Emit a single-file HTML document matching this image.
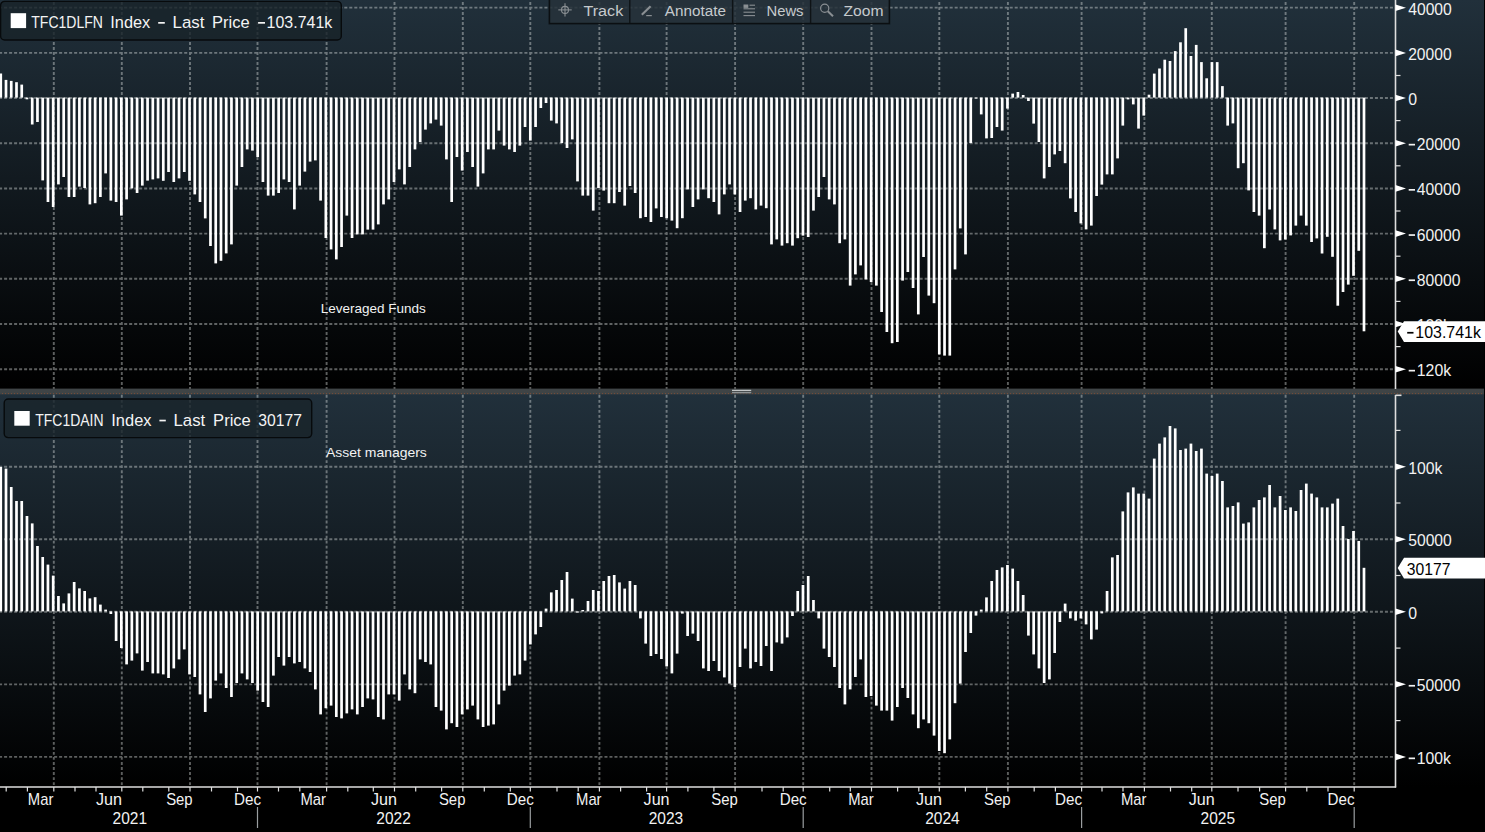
<!DOCTYPE html><html><head><meta charset="utf-8"><title>chart</title>
<style>html,body{margin:0;padding:0;background:#000;overflow:hidden}body{width:1485px;height:832px}svg{display:block}text{font-family:"Liberation Sans",sans-serif}</style></head><body>
<svg width="1485" height="832" viewBox="0 0 1485 832">
<defs><linearGradient id="g1" x1="0" y1="0" x2="0" y2="1"><stop offset="0" stop-color="#21303b"/><stop offset="1" stop-color="#000"/></linearGradient>
<linearGradient id="gg1" gradientUnits="userSpaceOnUse" x1="0" y1="0" x2="0" y2="389"><stop offset="0" stop-color="#ecf0ee"/><stop offset="1" stop-color="#ecf0ee"/></linearGradient>
<linearGradient id="gg2" gradientUnits="userSpaceOnUse" x1="0" y1="394" x2="0" y2="787"><stop offset="0" stop-color="#ecf0ee"/><stop offset="1" stop-color="#ecf0ee"/></linearGradient>
<linearGradient id="g2" x1="0" y1="0" x2="0" y2="1"><stop offset="0" stop-color="#21303b"/><stop offset="1" stop-color="#000"/></linearGradient></defs>
<rect x="0" y="0" width="1485" height="832" fill="#000"/>
<rect x="0" y="0" width="1484" height="389" fill="url(#g1)"/>
<rect x="0" y="394" width="1484" height="393" fill="url(#g2)"/>
<rect x="0" y="388.6" width="1484" height="5.8" fill="#3f4446"/>
<line x1="2" y1="393.6" x2="1484" y2="393.6" stroke="#b4582a" stroke-opacity="0.5" stroke-width="1" stroke-dasharray="1 2"/>
<rect x="732" y="389.7" width="19.2" height="3.9" fill="#4a4f51"/><rect x="732" y="389.8" width="19.2" height="1.2" fill="#c2c5c6"/><rect x="732" y="392" width="19.2" height="1.2" fill="#8f9395"/>
<g stroke-width="1.90" fill="none" opacity="0.39">
<line x1="53.8" y1="-2.9" x2="53.8" y2="388.8" stroke="url(#gg1)" stroke-dasharray="2.9 2.1"/>
<line x1="53.8" y1="394.85" x2="53.8" y2="787" stroke="url(#gg2)" stroke-dasharray="2.85 2.18"/>
<line x1="121.8" y1="-2.9" x2="121.8" y2="388.8" stroke="url(#gg1)" stroke-dasharray="2.9 2.1"/>
<line x1="121.8" y1="394.85" x2="121.8" y2="787" stroke="url(#gg2)" stroke-dasharray="2.85 2.18"/>
<line x1="190.0" y1="-2.9" x2="190.0" y2="388.8" stroke="url(#gg1)" stroke-dasharray="2.9 2.1"/>
<line x1="190.0" y1="394.85" x2="190.0" y2="787" stroke="url(#gg2)" stroke-dasharray="2.85 2.18"/>
<line x1="257.5" y1="-2.9" x2="257.5" y2="388.8" stroke="url(#gg1)" stroke-dasharray="2.9 2.1"/>
<line x1="257.5" y1="394.85" x2="257.5" y2="787" stroke="url(#gg2)" stroke-dasharray="2.85 2.18"/>
<line x1="326.6" y1="-2.9" x2="326.6" y2="388.8" stroke="url(#gg1)" stroke-dasharray="2.9 2.1"/>
<line x1="326.6" y1="394.85" x2="326.6" y2="787" stroke="url(#gg2)" stroke-dasharray="2.85 2.18"/>
<line x1="394.5" y1="-2.9" x2="394.5" y2="388.8" stroke="url(#gg1)" stroke-dasharray="2.9 2.1"/>
<line x1="394.5" y1="394.85" x2="394.5" y2="787" stroke="url(#gg2)" stroke-dasharray="2.85 2.18"/>
<line x1="462.8" y1="-2.9" x2="462.8" y2="388.8" stroke="url(#gg1)" stroke-dasharray="2.9 2.1"/>
<line x1="462.8" y1="394.85" x2="462.8" y2="787" stroke="url(#gg2)" stroke-dasharray="2.85 2.18"/>
<line x1="530.3" y1="-2.9" x2="530.3" y2="388.8" stroke="url(#gg1)" stroke-dasharray="2.9 2.1"/>
<line x1="530.3" y1="394.85" x2="530.3" y2="787" stroke="url(#gg2)" stroke-dasharray="2.85 2.18"/>
<line x1="599.4" y1="-2.9" x2="599.4" y2="388.8" stroke="url(#gg1)" stroke-dasharray="2.9 2.1"/>
<line x1="599.4" y1="394.85" x2="599.4" y2="787" stroke="url(#gg2)" stroke-dasharray="2.85 2.18"/>
<line x1="666.6" y1="-2.9" x2="666.6" y2="388.8" stroke="url(#gg1)" stroke-dasharray="2.9 2.1"/>
<line x1="666.6" y1="394.85" x2="666.6" y2="787" stroke="url(#gg2)" stroke-dasharray="2.85 2.18"/>
<line x1="735.1" y1="-2.9" x2="735.1" y2="388.8" stroke="url(#gg1)" stroke-dasharray="2.9 2.1"/>
<line x1="735.1" y1="394.85" x2="735.1" y2="787" stroke="url(#gg2)" stroke-dasharray="2.85 2.18"/>
<line x1="803.2" y1="-2.9" x2="803.2" y2="388.8" stroke="url(#gg1)" stroke-dasharray="2.9 2.1"/>
<line x1="803.2" y1="394.85" x2="803.2" y2="787" stroke="url(#gg2)" stroke-dasharray="2.85 2.18"/>
<line x1="871.5" y1="-2.9" x2="871.5" y2="388.8" stroke="url(#gg1)" stroke-dasharray="2.9 2.1"/>
<line x1="871.5" y1="394.85" x2="871.5" y2="787" stroke="url(#gg2)" stroke-dasharray="2.85 2.18"/>
<line x1="939.3" y1="-2.9" x2="939.3" y2="388.8" stroke="url(#gg1)" stroke-dasharray="2.9 2.1"/>
<line x1="939.3" y1="394.85" x2="939.3" y2="787" stroke="url(#gg2)" stroke-dasharray="2.85 2.18"/>
<line x1="1007.9" y1="-2.9" x2="1007.9" y2="388.8" stroke="url(#gg1)" stroke-dasharray="2.9 2.1"/>
<line x1="1007.9" y1="394.85" x2="1007.9" y2="787" stroke="url(#gg2)" stroke-dasharray="2.85 2.18"/>
<line x1="1081.6" y1="-2.9" x2="1081.6" y2="388.8" stroke="url(#gg1)" stroke-dasharray="2.9 2.1"/>
<line x1="1081.6" y1="394.85" x2="1081.6" y2="787" stroke="url(#gg2)" stroke-dasharray="2.85 2.18"/>
<line x1="1144.4" y1="-2.9" x2="1144.4" y2="388.8" stroke="url(#gg1)" stroke-dasharray="2.9 2.1"/>
<line x1="1144.4" y1="394.85" x2="1144.4" y2="787" stroke="url(#gg2)" stroke-dasharray="2.85 2.18"/>
<line x1="1211.8" y1="-2.9" x2="1211.8" y2="388.8" stroke="url(#gg1)" stroke-dasharray="2.9 2.1"/>
<line x1="1211.8" y1="394.85" x2="1211.8" y2="787" stroke="url(#gg2)" stroke-dasharray="2.85 2.18"/>
<line x1="1285.6" y1="-2.9" x2="1285.6" y2="388.8" stroke="url(#gg1)" stroke-dasharray="2.9 2.1"/>
<line x1="1285.6" y1="394.85" x2="1285.6" y2="787" stroke="url(#gg2)" stroke-dasharray="2.85 2.18"/>
<line x1="1354.2" y1="-2.9" x2="1354.2" y2="388.8" stroke="url(#gg1)" stroke-dasharray="2.9 2.1"/>
<line x1="1354.2" y1="394.85" x2="1354.2" y2="787" stroke="url(#gg2)" stroke-dasharray="2.85 2.18"/>
<line x1="-0.9" y1="7.67" x2="1395.5" y2="7.67" stroke="url(#gg1)" stroke-dasharray="3 2.003"/>
<line x1="-0.9" y1="52.86" x2="1395.5" y2="52.86" stroke="url(#gg1)" stroke-dasharray="3 2.003"/>
<line x1="-0.9" y1="98.05" x2="1395.5" y2="98.05" stroke="url(#gg1)" stroke-dasharray="3 2.003"/>
<line x1="-0.9" y1="143.24" x2="1395.5" y2="143.24" stroke="url(#gg1)" stroke-dasharray="3 2.003"/>
<line x1="-0.9" y1="188.43" x2="1395.5" y2="188.43" stroke="url(#gg1)" stroke-dasharray="3 2.003"/>
<line x1="-0.9" y1="233.62" x2="1395.5" y2="233.62" stroke="url(#gg1)" stroke-dasharray="3 2.003"/>
<line x1="-0.9" y1="278.81" x2="1395.5" y2="278.81" stroke="url(#gg1)" stroke-dasharray="3 2.003"/>
<line x1="-0.9" y1="324.00" x2="1395.5" y2="324.00" stroke="url(#gg1)" stroke-dasharray="3 2.003"/>
<line x1="-0.9" y1="369.19" x2="1395.5" y2="369.19" stroke="url(#gg1)" stroke-dasharray="3 2.003"/>
<line x1="-0.9" y1="466.72" x2="1395.5" y2="466.72" stroke="url(#gg2)" stroke-dasharray="3 2.003"/>
<line x1="-0.9" y1="539.26" x2="1395.5" y2="539.26" stroke="url(#gg2)" stroke-dasharray="3 2.003"/>
<line x1="-0.9" y1="611.80" x2="1395.5" y2="611.80" stroke="url(#gg2)" stroke-dasharray="3 2.003"/>
<line x1="-0.9" y1="684.34" x2="1395.5" y2="684.34" stroke="url(#gg2)" stroke-dasharray="3 2.003"/>
<line x1="-0.9" y1="756.88" x2="1395.5" y2="756.88" stroke="url(#gg2)" stroke-dasharray="3 2.003"/>
</g>
<g fill="#fff">
<rect x="-0.59" y="73.50" width="2.70" height="24.10"/>
<rect x="4.65" y="79.90" width="2.70" height="17.70"/>
<rect x="9.89" y="80.90" width="2.70" height="16.70"/>
<rect x="15.14" y="82.20" width="2.70" height="15.40"/>
<rect x="20.38" y="84.60" width="2.70" height="13.00"/>
<rect x="25.62" y="97.60" width="2.70" height="1.70"/>
<rect x="30.87" y="97.60" width="2.70" height="26.90"/>
<rect x="36.11" y="97.60" width="2.70" height="24.40"/>
<rect x="41.35" y="97.60" width="2.70" height="82.80"/>
<rect x="46.60" y="97.60" width="2.70" height="104.40"/>
<rect x="51.84" y="97.60" width="2.70" height="109.40"/>
<rect x="57.08" y="97.60" width="2.70" height="86.80"/>
<rect x="62.33" y="97.60" width="2.70" height="79.40"/>
<rect x="67.57" y="97.60" width="2.70" height="99.40"/>
<rect x="72.81" y="97.60" width="2.70" height="99.40"/>
<rect x="78.05" y="97.60" width="2.70" height="89.00"/>
<rect x="83.30" y="97.60" width="2.70" height="90.40"/>
<rect x="88.54" y="97.60" width="2.70" height="106.80"/>
<rect x="93.78" y="97.60" width="2.70" height="105.60"/>
<rect x="99.03" y="97.60" width="2.70" height="99.40"/>
<rect x="104.27" y="97.60" width="2.70" height="75.80"/>
<rect x="109.51" y="97.60" width="2.70" height="103.00"/>
<rect x="114.76" y="97.60" width="2.70" height="104.40"/>
<rect x="120.00" y="97.60" width="2.70" height="118.00"/>
<rect x="125.24" y="97.60" width="2.70" height="101.80"/>
<rect x="130.49" y="97.60" width="2.70" height="90.80"/>
<rect x="135.73" y="97.60" width="2.70" height="95.40"/>
<rect x="140.97" y="97.60" width="2.70" height="88.00"/>
<rect x="146.22" y="97.60" width="2.70" height="83.00"/>
<rect x="151.46" y="97.60" width="2.70" height="81.80"/>
<rect x="156.70" y="97.60" width="2.70" height="80.80"/>
<rect x="161.95" y="97.60" width="2.70" height="83.20"/>
<rect x="167.19" y="97.60" width="2.70" height="74.40"/>
<rect x="172.43" y="97.60" width="2.70" height="84.40"/>
<rect x="177.68" y="97.60" width="2.70" height="80.80"/>
<rect x="182.92" y="97.60" width="2.70" height="74.40"/>
<rect x="188.16" y="97.60" width="2.70" height="83.20"/>
<rect x="193.41" y="97.60" width="2.70" height="96.80"/>
<rect x="198.65" y="97.60" width="2.70" height="104.40"/>
<rect x="203.89" y="97.60" width="2.70" height="120.80"/>
<rect x="209.13" y="97.60" width="2.70" height="148.40"/>
<rect x="214.38" y="97.60" width="2.70" height="165.80"/>
<rect x="219.62" y="97.60" width="2.70" height="163.20"/>
<rect x="224.86" y="97.60" width="2.70" height="155.80"/>
<rect x="230.11" y="97.60" width="2.70" height="146.80"/>
<rect x="235.35" y="97.60" width="2.70" height="88.00"/>
<rect x="240.59" y="97.60" width="2.70" height="69.40"/>
<rect x="245.84" y="97.60" width="2.70" height="51.80"/>
<rect x="251.08" y="97.60" width="2.70" height="53.00"/>
<rect x="256.32" y="97.60" width="2.70" height="59.40"/>
<rect x="261.57" y="97.60" width="2.70" height="84.40"/>
<rect x="266.81" y="97.60" width="2.70" height="98.00"/>
<rect x="272.05" y="97.60" width="2.70" height="98.00"/>
<rect x="277.30" y="97.60" width="2.70" height="95.40"/>
<rect x="282.54" y="97.60" width="2.70" height="81.80"/>
<rect x="287.78" y="97.60" width="2.70" height="84.40"/>
<rect x="293.03" y="97.60" width="2.70" height="111.80"/>
<rect x="298.27" y="97.60" width="2.70" height="88.00"/>
<rect x="303.51" y="97.60" width="2.70" height="74.00"/>
<rect x="308.76" y="97.60" width="2.70" height="64.00"/>
<rect x="314.00" y="97.60" width="2.70" height="62.80"/>
<rect x="319.24" y="97.60" width="2.70" height="103.00"/>
<rect x="324.49" y="97.60" width="2.70" height="140.40"/>
<rect x="329.73" y="97.60" width="2.70" height="151.80"/>
<rect x="334.97" y="97.60" width="2.70" height="161.80"/>
<rect x="340.21" y="97.60" width="2.70" height="149.40"/>
<rect x="345.46" y="97.60" width="2.70" height="118.00"/>
<rect x="350.70" y="97.60" width="2.70" height="140.40"/>
<rect x="355.94" y="97.60" width="2.70" height="136.80"/>
<rect x="361.19" y="97.60" width="2.70" height="136.80"/>
<rect x="366.43" y="97.60" width="2.70" height="132.00"/>
<rect x="371.67" y="97.60" width="2.70" height="132.00"/>
<rect x="376.92" y="97.60" width="2.70" height="126.80"/>
<rect x="382.16" y="97.60" width="2.70" height="106.80"/>
<rect x="387.40" y="97.60" width="2.70" height="101.80"/>
<rect x="392.65" y="97.60" width="2.70" height="84.40"/>
<rect x="397.89" y="97.60" width="2.70" height="71.80"/>
<rect x="403.13" y="97.60" width="2.70" height="86.80"/>
<rect x="408.38" y="97.60" width="2.70" height="69.40"/>
<rect x="413.62" y="97.60" width="2.70" height="51.80"/>
<rect x="418.86" y="97.60" width="2.70" height="44.40"/>
<rect x="424.11" y="97.60" width="2.70" height="32.00"/>
<rect x="429.35" y="97.60" width="2.70" height="25.80"/>
<rect x="434.59" y="97.60" width="2.70" height="22.00"/>
<rect x="439.84" y="97.60" width="2.70" height="28.00"/>
<rect x="445.08" y="97.60" width="2.70" height="61.80"/>
<rect x="450.32" y="97.60" width="2.70" height="104.40"/>
<rect x="455.57" y="97.60" width="2.70" height="59.40"/>
<rect x="460.81" y="97.60" width="2.70" height="73.00"/>
<rect x="466.05" y="97.60" width="2.70" height="54.40"/>
<rect x="471.29" y="97.60" width="2.70" height="69.40"/>
<rect x="476.54" y="97.60" width="2.70" height="89.00"/>
<rect x="481.78" y="97.60" width="2.70" height="75.80"/>
<rect x="487.02" y="97.60" width="2.70" height="51.80"/>
<rect x="492.27" y="97.60" width="2.70" height="51.80"/>
<rect x="497.51" y="97.60" width="2.70" height="33.00"/>
<rect x="502.75" y="97.60" width="2.70" height="48.00"/>
<rect x="508.00" y="97.60" width="2.70" height="51.80"/>
<rect x="513.24" y="97.60" width="2.70" height="54.40"/>
<rect x="518.48" y="97.60" width="2.70" height="48.00"/>
<rect x="523.73" y="97.60" width="2.70" height="29.40"/>
<rect x="528.97" y="97.60" width="2.70" height="43.00"/>
<rect x="534.21" y="97.60" width="2.70" height="29.40"/>
<rect x="539.46" y="97.60" width="2.70" height="10.40"/>
<rect x="544.70" y="97.60" width="2.70" height="5.40"/>
<rect x="549.94" y="97.60" width="2.70" height="23.00"/>
<rect x="555.19" y="97.60" width="2.70" height="25.80"/>
<rect x="560.43" y="97.60" width="2.70" height="45.40"/>
<rect x="565.67" y="97.60" width="2.70" height="50.40"/>
<rect x="570.92" y="97.60" width="2.70" height="41.80"/>
<rect x="576.16" y="97.60" width="2.70" height="83.80"/>
<rect x="581.40" y="97.60" width="2.70" height="98.00"/>
<rect x="586.65" y="97.60" width="2.70" height="98.00"/>
<rect x="591.89" y="97.60" width="2.70" height="113.00"/>
<rect x="597.13" y="97.60" width="2.70" height="90.40"/>
<rect x="602.37" y="97.60" width="2.70" height="93.00"/>
<rect x="607.62" y="97.60" width="2.70" height="105.60"/>
<rect x="612.86" y="97.60" width="2.70" height="105.60"/>
<rect x="618.10" y="97.60" width="2.70" height="94.40"/>
<rect x="623.35" y="97.60" width="2.70" height="108.00"/>
<rect x="628.59" y="97.60" width="2.70" height="88.40"/>
<rect x="633.83" y="97.60" width="2.70" height="95.40"/>
<rect x="639.08" y="97.60" width="2.70" height="120.60"/>
<rect x="644.32" y="97.60" width="2.70" height="119.40"/>
<rect x="649.56" y="97.60" width="2.70" height="124.40"/>
<rect x="654.81" y="97.60" width="2.70" height="110.80"/>
<rect x="660.05" y="97.60" width="2.70" height="119.40"/>
<rect x="665.29" y="97.60" width="2.70" height="120.60"/>
<rect x="670.54" y="97.60" width="2.70" height="123.00"/>
<rect x="675.78" y="97.60" width="2.70" height="130.60"/>
<rect x="681.02" y="97.60" width="2.70" height="120.60"/>
<rect x="686.27" y="97.60" width="2.70" height="91.80"/>
<rect x="691.51" y="97.60" width="2.70" height="109.40"/>
<rect x="696.75" y="97.60" width="2.70" height="101.80"/>
<rect x="702.00" y="97.60" width="2.70" height="91.80"/>
<rect x="707.24" y="97.60" width="2.70" height="100.60"/>
<rect x="712.48" y="97.60" width="2.70" height="104.40"/>
<rect x="717.73" y="97.60" width="2.70" height="116.80"/>
<rect x="722.97" y="97.60" width="2.70" height="96.80"/>
<rect x="728.21" y="97.60" width="2.70" height="86.80"/>
<rect x="733.45" y="97.60" width="2.70" height="96.80"/>
<rect x="738.70" y="97.60" width="2.70" height="114.40"/>
<rect x="743.94" y="97.60" width="2.70" height="103.00"/>
<rect x="749.18" y="97.60" width="2.70" height="100.60"/>
<rect x="754.43" y="97.60" width="2.70" height="111.80"/>
<rect x="759.67" y="97.60" width="2.70" height="108.00"/>
<rect x="764.91" y="97.60" width="2.70" height="110.60"/>
<rect x="770.16" y="97.60" width="2.70" height="146.80"/>
<rect x="775.40" y="97.60" width="2.70" height="141.80"/>
<rect x="780.64" y="97.60" width="2.70" height="148.00"/>
<rect x="785.89" y="97.60" width="2.70" height="145.60"/>
<rect x="791.13" y="97.60" width="2.70" height="148.00"/>
<rect x="796.37" y="97.60" width="2.70" height="140.60"/>
<rect x="801.62" y="97.60" width="2.70" height="138.00"/>
<rect x="806.86" y="97.60" width="2.70" height="139.40"/>
<rect x="812.10" y="97.60" width="2.70" height="113.00"/>
<rect x="817.35" y="97.60" width="2.70" height="99.40"/>
<rect x="822.59" y="97.60" width="2.70" height="79.40"/>
<rect x="827.83" y="97.60" width="2.70" height="101.80"/>
<rect x="833.08" y="97.60" width="2.70" height="106.80"/>
<rect x="838.32" y="97.60" width="2.70" height="145.60"/>
<rect x="843.56" y="97.60" width="2.70" height="141.80"/>
<rect x="848.81" y="97.60" width="2.70" height="188.00"/>
<rect x="854.05" y="97.60" width="2.70" height="176.80"/>
<rect x="859.29" y="97.60" width="2.70" height="167.80"/>
<rect x="864.53" y="97.60" width="2.70" height="181.80"/>
<rect x="869.78" y="97.60" width="2.70" height="184.40"/>
<rect x="875.02" y="97.60" width="2.70" height="188.00"/>
<rect x="880.26" y="97.60" width="2.70" height="214.40"/>
<rect x="885.51" y="97.60" width="2.70" height="234.40"/>
<rect x="890.75" y="97.60" width="2.70" height="245.60"/>
<rect x="895.99" y="97.60" width="2.70" height="244.40"/>
<rect x="901.24" y="97.60" width="2.70" height="183.00"/>
<rect x="906.48" y="97.60" width="2.70" height="174.40"/>
<rect x="911.72" y="97.60" width="2.70" height="190.40"/>
<rect x="916.97" y="97.60" width="2.70" height="216.80"/>
<rect x="922.21" y="97.60" width="2.70" height="159.40"/>
<rect x="927.45" y="97.60" width="2.70" height="198.00"/>
<rect x="932.70" y="97.60" width="2.70" height="205.60"/>
<rect x="937.94" y="97.60" width="2.70" height="256.80"/>
<rect x="943.18" y="97.60" width="2.70" height="258.00"/>
<rect x="948.43" y="97.60" width="2.70" height="258.00"/>
<rect x="953.67" y="97.60" width="2.70" height="171.80"/>
<rect x="958.91" y="97.60" width="2.70" height="130.80"/>
<rect x="964.16" y="97.60" width="2.70" height="156.80"/>
<rect x="1074.26" y="97.60" width="2.70" height="114.40"/>
<rect x="1079.51" y="97.60" width="2.70" height="125.80"/>
<rect x="1084.75" y="97.60" width="2.70" height="131.80"/>
<rect x="1089.99" y="97.60" width="2.70" height="128.00"/>
<rect x="969.40" y="97.60" width="2.70" height="45.40"/>
<rect x="974.64" y="97.60" width="2.70" height="0.90"/>
<rect x="979.89" y="97.60" width="2.70" height="16.80"/>
<rect x="985.13" y="97.60" width="2.70" height="40.80"/>
<rect x="990.37" y="97.60" width="2.70" height="40.40"/>
<rect x="995.61" y="97.60" width="2.70" height="29.40"/>
<rect x="1000.86" y="97.60" width="2.70" height="33.00"/>
<rect x="1006.10" y="97.60" width="2.70" height="11.00"/>
<rect x="1011.34" y="93.60" width="2.70" height="4.00"/>
<rect x="1016.59" y="92.00" width="2.70" height="5.60"/>
<rect x="1021.83" y="95.00" width="2.70" height="2.60"/>
<rect x="1027.07" y="97.60" width="2.70" height="3.40"/>
<rect x="1032.32" y="97.60" width="2.70" height="26.00"/>
<rect x="1037.56" y="97.60" width="2.70" height="44.40"/>
<rect x="1042.80" y="97.60" width="2.70" height="80.80"/>
<rect x="1048.05" y="97.60" width="2.70" height="69.40"/>
<rect x="1053.29" y="97.60" width="2.70" height="56.80"/>
<rect x="1058.53" y="97.60" width="2.70" height="53.40"/>
<rect x="1063.78" y="97.60" width="2.70" height="65.60"/>
<rect x="1069.02" y="97.60" width="2.70" height="100.80"/>
<rect x="1095.24" y="97.60" width="2.70" height="98.40"/>
<rect x="1100.48" y="97.60" width="2.70" height="87.00"/>
<rect x="1105.72" y="97.60" width="2.70" height="76.80"/>
<rect x="1110.97" y="97.60" width="2.70" height="76.80"/>
<rect x="1116.21" y="97.60" width="2.70" height="60.80"/>
<rect x="1121.45" y="97.60" width="2.70" height="28.00"/>
<rect x="1126.69" y="97.60" width="2.70" height="1.80"/>
<rect x="1131.94" y="97.60" width="2.70" height="6.80"/>
<rect x="1137.18" y="97.60" width="2.70" height="31.00"/>
<rect x="1142.42" y="97.60" width="2.70" height="18.00"/>
<rect x="1147.67" y="94.70" width="2.70" height="2.90"/>
<rect x="1152.91" y="73.60" width="2.70" height="24.00"/>
<rect x="1158.15" y="68.50" width="2.70" height="29.10"/>
<rect x="1163.40" y="59.70" width="2.70" height="37.90"/>
<rect x="1168.64" y="61.00" width="2.70" height="36.60"/>
<rect x="1173.88" y="51.10" width="2.70" height="46.50"/>
<rect x="1179.13" y="42.30" width="2.70" height="55.30"/>
<rect x="1184.37" y="28.20" width="2.70" height="69.40"/>
<rect x="1189.61" y="56.00" width="2.70" height="41.60"/>
<rect x="1194.86" y="44.90" width="2.70" height="52.70"/>
<rect x="1200.10" y="62.10" width="2.70" height="35.50"/>
<rect x="1205.34" y="78.30" width="2.70" height="19.30"/>
<rect x="1210.59" y="62.10" width="2.70" height="35.50"/>
<rect x="1215.83" y="62.10" width="2.70" height="35.50"/>
<rect x="1221.07" y="86.10" width="2.70" height="11.50"/>
<rect x="1226.32" y="97.60" width="2.70" height="28.00"/>
<rect x="1231.56" y="97.60" width="2.70" height="25.80"/>
<rect x="1236.80" y="97.60" width="2.70" height="70.60"/>
<rect x="1242.05" y="97.60" width="2.70" height="65.60"/>
<rect x="1247.29" y="97.60" width="2.70" height="92.80"/>
<rect x="1252.53" y="97.60" width="2.70" height="114.40"/>
<rect x="1257.77" y="97.60" width="2.70" height="118.00"/>
<rect x="1263.02" y="97.60" width="2.70" height="150.60"/>
<rect x="1268.26" y="97.60" width="2.70" height="111.90"/>
<rect x="1273.50" y="97.60" width="2.70" height="131.80"/>
<rect x="1278.75" y="97.60" width="2.70" height="142.80"/>
<rect x="1283.99" y="97.60" width="2.70" height="141.90"/>
<rect x="1289.23" y="97.60" width="2.70" height="137.80"/>
<rect x="1294.48" y="97.60" width="2.70" height="128.00"/>
<rect x="1299.72" y="97.60" width="2.70" height="118.00"/>
<rect x="1304.96" y="97.60" width="2.70" height="128.00"/>
<rect x="1310.21" y="97.60" width="2.70" height="144.40"/>
<rect x="1315.45" y="97.60" width="2.70" height="140.80"/>
<rect x="1320.69" y="97.60" width="2.70" height="155.90"/>
<rect x="1325.94" y="97.60" width="2.70" height="139.20"/>
<rect x="1331.18" y="97.60" width="2.70" height="159.20"/>
<rect x="1336.42" y="97.60" width="2.70" height="208.10"/>
<rect x="1341.67" y="97.60" width="2.70" height="194.40"/>
<rect x="1346.91" y="97.60" width="2.70" height="187.00"/>
<rect x="1352.15" y="97.60" width="2.70" height="178.20"/>
<rect x="1357.40" y="97.60" width="2.70" height="153.20"/>
<rect x="1362.64" y="97.60" width="2.70" height="233.70"/>
<rect x="-0.59" y="467.00" width="2.70" height="144.40"/>
<rect x="4.65" y="468.60" width="2.70" height="142.80"/>
<rect x="9.89" y="487.00" width="2.70" height="124.40"/>
<rect x="15.14" y="501.00" width="2.70" height="110.40"/>
<rect x="20.38" y="501.00" width="2.70" height="110.40"/>
<rect x="25.62" y="516.00" width="2.70" height="95.40"/>
<rect x="30.87" y="523.40" width="2.70" height="88.00"/>
<rect x="36.11" y="546.00" width="2.70" height="65.40"/>
<rect x="41.35" y="557.00" width="2.70" height="54.40"/>
<rect x="46.60" y="564.60" width="2.70" height="46.80"/>
<rect x="51.84" y="575.60" width="2.70" height="35.80"/>
<rect x="57.08" y="596.00" width="2.70" height="15.40"/>
<rect x="62.33" y="603.40" width="2.70" height="8.00"/>
<rect x="67.57" y="593.40" width="2.70" height="18.00"/>
<rect x="72.81" y="582.00" width="2.70" height="29.40"/>
<rect x="78.05" y="588.40" width="2.70" height="23.00"/>
<rect x="83.30" y="591.00" width="2.70" height="20.40"/>
<rect x="88.54" y="598.40" width="2.70" height="13.00"/>
<rect x="93.78" y="597.20" width="2.70" height="14.20"/>
<rect x="99.03" y="604.60" width="2.70" height="6.80"/>
<rect x="104.27" y="609.60" width="2.70" height="1.80"/>
<rect x="109.51" y="611.40" width="2.70" height="2.60"/>
<rect x="114.76" y="611.40" width="2.70" height="29.60"/>
<rect x="120.00" y="611.40" width="2.70" height="36.60"/>
<rect x="125.24" y="611.40" width="2.70" height="53.00"/>
<rect x="130.49" y="611.40" width="2.70" height="49.20"/>
<rect x="135.73" y="611.40" width="2.70" height="42.00"/>
<rect x="140.97" y="611.40" width="2.70" height="59.20"/>
<rect x="146.22" y="611.40" width="2.70" height="50.60"/>
<rect x="151.46" y="611.40" width="2.70" height="62.00"/>
<rect x="156.70" y="611.40" width="2.70" height="62.00"/>
<rect x="161.95" y="611.40" width="2.70" height="63.00"/>
<rect x="167.19" y="611.40" width="2.70" height="66.60"/>
<rect x="172.43" y="611.40" width="2.70" height="57.00"/>
<rect x="177.68" y="611.40" width="2.70" height="48.00"/>
<rect x="182.92" y="611.40" width="2.70" height="38.00"/>
<rect x="188.16" y="611.40" width="2.70" height="63.00"/>
<rect x="193.41" y="611.40" width="2.70" height="65.60"/>
<rect x="198.65" y="611.40" width="2.70" height="83.00"/>
<rect x="203.89" y="611.40" width="2.70" height="100.60"/>
<rect x="209.13" y="611.40" width="2.70" height="87.00"/>
<rect x="214.38" y="611.40" width="2.70" height="69.20"/>
<rect x="219.62" y="611.40" width="2.70" height="62.00"/>
<rect x="224.86" y="611.40" width="2.70" height="76.60"/>
<rect x="230.11" y="611.40" width="2.70" height="85.60"/>
<rect x="235.35" y="611.40" width="2.70" height="71.60"/>
<rect x="240.59" y="611.40" width="2.70" height="62.00"/>
<rect x="245.84" y="611.40" width="2.70" height="68.00"/>
<rect x="251.08" y="611.40" width="2.70" height="71.60"/>
<rect x="256.32" y="611.40" width="2.70" height="79.20"/>
<rect x="261.57" y="611.40" width="2.70" height="90.60"/>
<rect x="266.81" y="611.40" width="2.70" height="95.60"/>
<rect x="272.05" y="611.40" width="2.70" height="64.20"/>
<rect x="277.30" y="611.40" width="2.70" height="45.60"/>
<rect x="282.54" y="611.40" width="2.70" height="54.20"/>
<rect x="287.78" y="611.40" width="2.70" height="45.60"/>
<rect x="293.03" y="611.40" width="2.70" height="52.00"/>
<rect x="298.27" y="611.40" width="2.70" height="50.60"/>
<rect x="303.51" y="611.40" width="2.70" height="57.00"/>
<rect x="308.76" y="611.40" width="2.70" height="60.60"/>
<rect x="314.00" y="611.40" width="2.70" height="78.00"/>
<rect x="319.24" y="611.40" width="2.70" height="103.00"/>
<rect x="324.49" y="611.40" width="2.70" height="96.80"/>
<rect x="329.73" y="611.40" width="2.70" height="94.20"/>
<rect x="334.97" y="611.40" width="2.70" height="105.60"/>
<rect x="340.21" y="611.40" width="2.70" height="107.00"/>
<rect x="345.46" y="611.40" width="2.70" height="102.00"/>
<rect x="350.70" y="611.40" width="2.70" height="98.00"/>
<rect x="355.94" y="611.40" width="2.70" height="103.00"/>
<rect x="361.19" y="611.40" width="2.70" height="95.60"/>
<rect x="366.43" y="611.40" width="2.70" height="87.00"/>
<rect x="371.67" y="611.40" width="2.70" height="88.00"/>
<rect x="376.92" y="611.40" width="2.70" height="105.60"/>
<rect x="382.16" y="611.40" width="2.70" height="108.00"/>
<rect x="387.40" y="611.40" width="2.70" height="83.00"/>
<rect x="392.65" y="611.40" width="2.70" height="83.00"/>
<rect x="397.89" y="611.40" width="2.70" height="89.20"/>
<rect x="403.13" y="611.40" width="2.70" height="63.00"/>
<rect x="408.38" y="611.40" width="2.70" height="78.00"/>
<rect x="413.62" y="611.40" width="2.70" height="81.80"/>
<rect x="418.86" y="611.40" width="2.70" height="48.00"/>
<rect x="424.11" y="611.40" width="2.70" height="50.60"/>
<rect x="429.35" y="611.40" width="2.70" height="53.00"/>
<rect x="434.59" y="611.40" width="2.70" height="95.60"/>
<rect x="439.84" y="611.40" width="2.70" height="99.20"/>
<rect x="445.08" y="611.40" width="2.70" height="118.00"/>
<rect x="450.32" y="611.40" width="2.70" height="111.80"/>
<rect x="455.57" y="611.40" width="2.70" height="115.60"/>
<rect x="460.81" y="611.40" width="2.70" height="103.00"/>
<rect x="466.05" y="611.40" width="2.70" height="98.00"/>
<rect x="471.29" y="611.40" width="2.70" height="94.20"/>
<rect x="476.54" y="611.40" width="2.70" height="108.00"/>
<rect x="481.78" y="611.40" width="2.70" height="115.60"/>
<rect x="487.02" y="611.40" width="2.70" height="114.20"/>
<rect x="492.27" y="611.40" width="2.70" height="113.00"/>
<rect x="497.51" y="611.40" width="2.70" height="93.00"/>
<rect x="502.75" y="611.40" width="2.70" height="79.20"/>
<rect x="508.00" y="611.40" width="2.70" height="74.20"/>
<rect x="513.24" y="611.40" width="2.70" height="64.20"/>
<rect x="518.48" y="611.40" width="2.70" height="63.00"/>
<rect x="523.73" y="611.40" width="2.70" height="49.20"/>
<rect x="528.97" y="611.40" width="2.70" height="33.00"/>
<rect x="534.21" y="611.40" width="2.70" height="23.00"/>
<rect x="539.46" y="611.40" width="2.70" height="15.60"/>
<rect x="544.70" y="608.60" width="2.70" height="2.80"/>
<rect x="549.94" y="592.40" width="2.70" height="19.00"/>
<rect x="555.19" y="590.00" width="2.70" height="21.40"/>
<rect x="560.43" y="580.00" width="2.70" height="31.40"/>
<rect x="565.67" y="572.00" width="2.70" height="39.40"/>
<rect x="570.92" y="598.60" width="2.70" height="12.80"/>
<rect x="576.16" y="611.40" width="2.70" height="1.20"/>
<rect x="581.40" y="610.00" width="2.70" height="1.40"/>
<rect x="586.65" y="601.00" width="2.70" height="10.40"/>
<rect x="591.89" y="590.00" width="2.70" height="21.40"/>
<rect x="597.13" y="591.00" width="2.70" height="20.40"/>
<rect x="602.37" y="581.00" width="2.70" height="30.40"/>
<rect x="607.62" y="576.00" width="2.70" height="35.40"/>
<rect x="612.86" y="575.00" width="2.70" height="36.40"/>
<rect x="618.10" y="582.40" width="2.70" height="29.00"/>
<rect x="623.35" y="588.60" width="2.70" height="22.80"/>
<rect x="628.59" y="581.00" width="2.70" height="30.40"/>
<rect x="633.83" y="585.00" width="2.70" height="26.40"/>
<rect x="639.08" y="611.40" width="2.70" height="7.00"/>
<rect x="644.32" y="611.40" width="2.70" height="32.20"/>
<rect x="649.56" y="611.40" width="2.70" height="44.60"/>
<rect x="654.81" y="611.40" width="2.70" height="42.60"/>
<rect x="660.05" y="611.40" width="2.70" height="47.60"/>
<rect x="665.29" y="611.40" width="2.70" height="55.00"/>
<rect x="670.54" y="611.40" width="2.70" height="62.00"/>
<rect x="675.78" y="611.40" width="2.70" height="42.20"/>
<rect x="681.02" y="611.40" width="2.70" height="2.20"/>
<rect x="686.27" y="611.40" width="2.70" height="24.60"/>
<rect x="691.51" y="611.40" width="2.70" height="22.20"/>
<rect x="696.75" y="611.40" width="2.70" height="29.60"/>
<rect x="702.00" y="611.40" width="2.70" height="57.00"/>
<rect x="707.24" y="611.40" width="2.70" height="59.60"/>
<rect x="712.48" y="611.40" width="2.70" height="49.60"/>
<rect x="717.73" y="611.40" width="2.70" height="59.60"/>
<rect x="722.97" y="611.40" width="2.70" height="66.00"/>
<rect x="728.21" y="611.40" width="2.70" height="72.20"/>
<rect x="733.45" y="611.40" width="2.70" height="75.60"/>
<rect x="738.70" y="611.40" width="2.70" height="55.60"/>
<rect x="743.94" y="611.40" width="2.70" height="37.20"/>
<rect x="749.18" y="611.40" width="2.70" height="57.00"/>
<rect x="754.43" y="611.40" width="2.70" height="50.60"/>
<rect x="759.67" y="611.40" width="2.70" height="54.60"/>
<rect x="764.91" y="611.40" width="2.70" height="34.60"/>
<rect x="770.16" y="611.40" width="2.70" height="59.60"/>
<rect x="775.40" y="611.40" width="2.70" height="31.00"/>
<rect x="780.64" y="611.40" width="2.70" height="32.20"/>
<rect x="785.89" y="611.40" width="2.70" height="26.00"/>
<rect x="791.13" y="611.40" width="2.70" height="4.60"/>
<rect x="796.37" y="591.00" width="2.70" height="20.40"/>
<rect x="801.62" y="585.00" width="2.70" height="26.40"/>
<rect x="806.86" y="576.00" width="2.70" height="35.40"/>
<rect x="812.10" y="600.00" width="2.70" height="11.40"/>
<rect x="817.35" y="611.40" width="2.70" height="7.00"/>
<rect x="822.59" y="611.40" width="2.70" height="37.20"/>
<rect x="827.83" y="611.40" width="2.70" height="45.60"/>
<rect x="833.08" y="611.40" width="2.70" height="55.60"/>
<rect x="838.32" y="611.40" width="2.70" height="76.60"/>
<rect x="843.56" y="611.40" width="2.70" height="93.00"/>
<rect x="848.81" y="611.40" width="2.70" height="78.00"/>
<rect x="854.05" y="611.40" width="2.70" height="65.60"/>
<rect x="859.29" y="611.40" width="2.70" height="48.00"/>
<rect x="864.53" y="611.40" width="2.70" height="85.60"/>
<rect x="869.78" y="611.40" width="2.70" height="84.60"/>
<rect x="875.02" y="611.40" width="2.70" height="94.20"/>
<rect x="880.26" y="611.40" width="2.70" height="99.20"/>
<rect x="885.51" y="611.40" width="2.70" height="99.20"/>
<rect x="890.75" y="611.40" width="2.70" height="109.20"/>
<rect x="895.99" y="611.40" width="2.70" height="95.60"/>
<rect x="901.24" y="611.40" width="2.70" height="76.60"/>
<rect x="906.48" y="611.40" width="2.70" height="86.60"/>
<rect x="911.72" y="611.40" width="2.70" height="103.00"/>
<rect x="916.97" y="611.40" width="2.70" height="116.80"/>
<rect x="922.21" y="611.40" width="2.70" height="108.00"/>
<rect x="927.45" y="611.40" width="2.70" height="111.80"/>
<rect x="932.70" y="611.40" width="2.70" height="124.20"/>
<rect x="937.94" y="611.40" width="2.70" height="139.60"/>
<rect x="943.18" y="611.40" width="2.70" height="141.80"/>
<rect x="948.43" y="611.40" width="2.70" height="128.00"/>
<rect x="953.67" y="611.40" width="2.70" height="91.80"/>
<rect x="958.91" y="611.40" width="2.70" height="72.20"/>
<rect x="964.16" y="611.40" width="2.70" height="40.60"/>
<rect x="969.40" y="611.40" width="2.70" height="21.60"/>
<rect x="974.64" y="611.40" width="2.70" height="4.20"/>
<rect x="979.89" y="609.60" width="2.70" height="1.80"/>
<rect x="1027.07" y="611.40" width="2.70" height="24.20"/>
<rect x="1032.32" y="611.40" width="2.70" height="43.00"/>
<rect x="1037.56" y="611.40" width="2.70" height="57.00"/>
<rect x="1042.80" y="611.40" width="2.70" height="71.60"/>
<rect x="1048.05" y="611.40" width="2.70" height="68.00"/>
<rect x="1053.29" y="611.40" width="2.70" height="41.60"/>
<rect x="1058.53" y="611.40" width="2.70" height="10.60"/>
<rect x="1063.78" y="603.60" width="2.70" height="7.80"/>
<rect x="1069.02" y="611.40" width="2.70" height="7.00"/>
<rect x="1074.26" y="611.40" width="2.70" height="9.20"/>
<rect x="1079.51" y="611.40" width="2.70" height="7.00"/>
<rect x="1084.75" y="611.40" width="2.70" height="13.00"/>
<rect x="1089.99" y="611.40" width="2.70" height="28.00"/>
<rect x="1095.24" y="611.40" width="2.70" height="18.20"/>
<rect x="985.13" y="597.40" width="2.70" height="14.00"/>
<rect x="990.37" y="581.00" width="2.70" height="30.40"/>
<rect x="995.61" y="570.00" width="2.70" height="41.40"/>
<rect x="1000.86" y="567.40" width="2.70" height="44.00"/>
<rect x="1006.10" y="565.00" width="2.70" height="46.40"/>
<rect x="1011.34" y="568.60" width="2.70" height="42.80"/>
<rect x="1016.59" y="581.00" width="2.70" height="30.40"/>
<rect x="1021.83" y="595.00" width="2.70" height="16.40"/>
<rect x="1100.48" y="611.40" width="2.70" height="2.00"/>
<rect x="1105.72" y="591.00" width="2.70" height="20.40"/>
<rect x="1110.97" y="557.40" width="2.70" height="54.00"/>
<rect x="1116.21" y="555.00" width="2.70" height="56.40"/>
<rect x="1121.45" y="511.40" width="2.70" height="100.00"/>
<rect x="1126.69" y="492.40" width="2.70" height="119.00"/>
<rect x="1131.94" y="487.40" width="2.70" height="124.00"/>
<rect x="1137.18" y="493.60" width="2.70" height="117.80"/>
<rect x="1142.42" y="493.60" width="2.70" height="117.80"/>
<rect x="1147.67" y="498.60" width="2.70" height="112.80"/>
<rect x="1152.91" y="458.60" width="2.70" height="152.80"/>
<rect x="1158.15" y="443.60" width="2.70" height="167.80"/>
<rect x="1163.40" y="437.40" width="2.70" height="174.00"/>
<rect x="1168.64" y="426.00" width="2.70" height="185.40"/>
<rect x="1173.88" y="428.40" width="2.70" height="183.00"/>
<rect x="1179.13" y="450.00" width="2.70" height="161.40"/>
<rect x="1184.37" y="448.60" width="2.70" height="162.80"/>
<rect x="1189.61" y="443.60" width="2.70" height="167.80"/>
<rect x="1194.86" y="451.00" width="2.70" height="160.40"/>
<rect x="1200.10" y="448.60" width="2.70" height="162.80"/>
<rect x="1205.34" y="473.60" width="2.70" height="137.80"/>
<rect x="1210.59" y="476.00" width="2.70" height="135.40"/>
<rect x="1215.83" y="473.60" width="2.70" height="137.80"/>
<rect x="1221.07" y="481.00" width="2.70" height="130.40"/>
<rect x="1226.32" y="507.40" width="2.70" height="104.00"/>
<rect x="1231.56" y="506.00" width="2.70" height="105.40"/>
<rect x="1236.80" y="502.40" width="2.70" height="109.00"/>
<rect x="1242.05" y="523.60" width="2.70" height="87.80"/>
<rect x="1247.29" y="522.40" width="2.70" height="89.00"/>
<rect x="1252.53" y="507.40" width="2.70" height="104.00"/>
<rect x="1257.77" y="500.00" width="2.70" height="111.40"/>
<rect x="1263.02" y="497.40" width="2.70" height="114.00"/>
<rect x="1268.26" y="485.00" width="2.70" height="126.40"/>
<rect x="1273.50" y="507.40" width="2.70" height="104.00"/>
<rect x="1278.75" y="496.00" width="2.70" height="115.40"/>
<rect x="1283.99" y="510.00" width="2.70" height="101.40"/>
<rect x="1289.23" y="507.40" width="2.70" height="104.00"/>
<rect x="1294.48" y="511.00" width="2.70" height="100.40"/>
<rect x="1299.72" y="490.00" width="2.70" height="121.40"/>
<rect x="1304.96" y="483.60" width="2.70" height="127.80"/>
<rect x="1310.21" y="493.60" width="2.70" height="117.80"/>
<rect x="1315.45" y="497.40" width="2.70" height="114.00"/>
<rect x="1320.69" y="507.40" width="2.70" height="104.00"/>
<rect x="1325.94" y="507.40" width="2.70" height="104.00"/>
<rect x="1331.18" y="503.60" width="2.70" height="107.80"/>
<rect x="1336.42" y="498.60" width="2.70" height="112.80"/>
<rect x="1341.67" y="526.00" width="2.70" height="85.40"/>
<rect x="1346.91" y="539.00" width="2.70" height="72.40"/>
<rect x="1352.15" y="531.00" width="2.70" height="80.40"/>
<rect x="1357.40" y="541.00" width="2.70" height="70.40"/>
<rect x="1362.64" y="567.80" width="2.70" height="43.60"/>
</g>
<g stroke="#dedede" stroke-width="1.6" fill="none">
<line x1="1395.5" y1="0" x2="1395.5" y2="389"/>
<line x1="1395.5" y1="395" x2="1395.5" y2="787.5"/>
<line x1="0" y1="787" x2="1396.1" y2="787"/>
<line x1="1395.5" y1="395.3" x2="1401.5" y2="395.3"/>
</g>
<g fill="#fff">
<path d="M1395.5 4.4 L1406.0 7.7 L1395.5 11.0 Z"/>
<path d="M1395.5 49.6 L1406.0 52.9 L1395.5 56.2 Z"/>
<path d="M1395.5 94.8 L1406.0 98.0 L1395.5 101.3 Z"/>
<path d="M1395.5 139.9 L1406.0 143.2 L1395.5 146.5 Z"/>
<path d="M1395.5 185.1 L1406.0 188.4 L1395.5 191.7 Z"/>
<path d="M1395.5 230.3 L1406.0 233.6 L1395.5 236.9 Z"/>
<path d="M1395.5 275.5 L1406.0 278.8 L1395.5 282.1 Z"/>
<path d="M1395.5 320.7 L1406.0 324.0 L1395.5 327.3 Z"/>
<path d="M1395.5 365.9 L1406.0 369.2 L1395.5 372.5 Z"/>
<path d="M1395.5 463.4 L1406.0 466.7 L1395.5 470.0 Z"/>
<path d="M1395.5 536.0 L1406.0 539.3 L1395.5 542.6 Z"/>
<path d="M1395.5 608.5 L1406.0 611.8 L1395.5 615.1 Z"/>
<path d="M1395.5 681.0 L1406.0 684.3 L1395.5 687.6 Z"/>
<path d="M1395.5 753.6 L1406.0 756.9 L1395.5 760.2 Z"/>
</g>
<g stroke="#dedede" stroke-width="1.2">
<line x1="1395.5" y1="75.5" x2="1400.5" y2="75.5"/>
<line x1="1395.5" y1="120.6" x2="1400.5" y2="120.6"/>
<line x1="1395.5" y1="165.8" x2="1400.5" y2="165.8"/>
<line x1="1395.5" y1="211.0" x2="1400.5" y2="211.0"/>
<line x1="1395.5" y1="256.2" x2="1400.5" y2="256.2"/>
<line x1="1395.5" y1="301.4" x2="1400.5" y2="301.4"/>
<line x1="1395.5" y1="346.6" x2="1400.5" y2="346.6"/>
<line x1="1395.5" y1="430.4" x2="1400.5" y2="430.4"/>
<line x1="1395.5" y1="503.0" x2="1400.5" y2="503.0"/>
<line x1="1395.5" y1="575.5" x2="1400.5" y2="575.5"/>
<line x1="1395.5" y1="648.1" x2="1400.5" y2="648.1"/>
<line x1="1395.5" y1="720.6" x2="1400.5" y2="720.6"/>
</g>
<text x="1408.2" y="14.6" font-size="17.2" fill="#f2f2f2" textLength="43.6" lengthAdjust="spacingAndGlyphs">40000</text>
<text x="1408.2" y="59.8" font-size="17.2" fill="#f2f2f2" textLength="43.4" lengthAdjust="spacingAndGlyphs">20000</text>
<text x="1408.2" y="105.0" font-size="17.2" fill="#f2f2f2" textLength="8.8" lengthAdjust="spacingAndGlyphs">0</text>
<rect x="1408.7" y="143.8" width="6.3" height="1.7" fill="#f2f2f2"/>
<text x="1416.8" y="150.1" font-size="17.2" fill="#f2f2f2" textLength="43.4" lengthAdjust="spacingAndGlyphs">20000</text>
<rect x="1408.7" y="189.0" width="6.3" height="1.7" fill="#f2f2f2"/>
<text x="1416.8" y="195.3" font-size="17.2" fill="#f2f2f2" textLength="43.6" lengthAdjust="spacingAndGlyphs">40000</text>
<rect x="1408.7" y="234.2" width="6.3" height="1.7" fill="#f2f2f2"/>
<text x="1416.8" y="240.5" font-size="17.2" fill="#f2f2f2" textLength="43.6" lengthAdjust="spacingAndGlyphs">60000</text>
<rect x="1408.7" y="279.4" width="6.3" height="1.7" fill="#f2f2f2"/>
<text x="1416.8" y="285.7" font-size="17.2" fill="#f2f2f2" textLength="43.6" lengthAdjust="spacingAndGlyphs">80000</text>
<rect x="1408.7" y="324.6" width="6.3" height="1.7" fill="#f2f2f2"/>
<text x="1416.8" y="330.9" font-size="17.2" fill="#f2f2f2" textLength="34.2" lengthAdjust="spacingAndGlyphs">100k</text>
<rect x="1408.7" y="369.8" width="6.3" height="1.7" fill="#f2f2f2"/>
<text x="1416.8" y="376.1" font-size="17.2" fill="#f2f2f2" textLength="34.4" lengthAdjust="spacingAndGlyphs">120k</text>
<text x="1408.2" y="473.6" font-size="17.2" fill="#f2f2f2" textLength="34.2" lengthAdjust="spacingAndGlyphs">100k</text>
<text x="1408.2" y="546.2" font-size="17.2" fill="#f2f2f2" textLength="43.6" lengthAdjust="spacingAndGlyphs">50000</text>
<text x="1408.2" y="618.7" font-size="17.2" fill="#f2f2f2" textLength="8.8" lengthAdjust="spacingAndGlyphs">0</text>
<rect x="1408.7" y="684.9" width="6.3" height="1.7" fill="#f2f2f2"/>
<text x="1416.8" y="691.2" font-size="17.2" fill="#f2f2f2" textLength="43.6" lengthAdjust="spacingAndGlyphs">50000</text>
<rect x="1408.7" y="757.5" width="6.3" height="1.7" fill="#f2f2f2"/>
<text x="1416.8" y="763.8" font-size="17.2" fill="#f2f2f2" textLength="34.2" lengthAdjust="spacingAndGlyphs">100k</text>
<path d="M1397.7 331.6 L1404 321.2 L1485 321.2 L1485 342.0 L1404 342.0 Z" fill="#fff"/>
<rect x="1407.2" y="331.9" width="6.3" height="1.7" fill="#000"/>
<text x="1415.3" y="338.2" font-size="17.2" fill="#000" textLength="65.6" lengthAdjust="spacingAndGlyphs">103.741k</text>
<path d="M1397.7 568.1 L1404 557.7 L1485 557.7 L1485 578.5 L1404 578.5 Z" fill="#fff"/>
<text x="1406.7" y="574.7" font-size="17.2" fill="#000" textLength="43.7" lengthAdjust="spacingAndGlyphs">30177</text>
<g stroke="#dedede" stroke-width="1.2">
<line x1="6.2" y1="787" x2="6.2" y2="791.5"/>
<line x1="27.4" y1="787" x2="27.4" y2="791.5"/>
<line x1="53.8" y1="787" x2="53.8" y2="791.5"/>
<line x1="75.0" y1="787" x2="75.0" y2="791.5"/>
<line x1="96.0" y1="787" x2="96.0" y2="791.5"/>
<line x1="121.8" y1="787" x2="121.8" y2="791.5"/>
<line x1="142.8" y1="787" x2="142.8" y2="791.5"/>
<line x1="168.8" y1="787" x2="168.8" y2="791.5"/>
<line x1="190.0" y1="787" x2="190.0" y2="791.5"/>
<line x1="211.5" y1="787" x2="211.5" y2="791.5"/>
<line x1="237.5" y1="787" x2="237.5" y2="791.5"/>
<line x1="257.5" y1="787" x2="257.5" y2="791.5"/>
<line x1="278.5" y1="787" x2="278.5" y2="791.5"/>
<line x1="299.8" y1="787" x2="299.8" y2="791.5"/>
<line x1="326.6" y1="787" x2="326.6" y2="791.5"/>
<line x1="347.8" y1="787" x2="347.8" y2="791.5"/>
<line x1="373.3" y1="787" x2="373.3" y2="791.5"/>
<line x1="394.5" y1="787" x2="394.5" y2="791.5"/>
<line x1="415.7" y1="787" x2="415.7" y2="791.5"/>
<line x1="441.6" y1="787" x2="441.6" y2="791.5"/>
<line x1="462.8" y1="787" x2="462.8" y2="791.5"/>
<line x1="484.3" y1="787" x2="484.3" y2="791.5"/>
<line x1="510.3" y1="787" x2="510.3" y2="791.5"/>
<line x1="530.3" y1="787" x2="530.3" y2="791.5"/>
<line x1="557.0" y1="787" x2="557.0" y2="791.5"/>
<line x1="578.2" y1="787" x2="578.2" y2="791.5"/>
<line x1="599.4" y1="787" x2="599.4" y2="791.5"/>
<line x1="620.6" y1="787" x2="620.6" y2="791.5"/>
<line x1="646.6" y1="787" x2="646.6" y2="791.5"/>
<line x1="666.6" y1="787" x2="666.6" y2="791.5"/>
<line x1="687.9" y1="787" x2="687.9" y2="791.5"/>
<line x1="713.9" y1="787" x2="713.9" y2="791.5"/>
<line x1="735.1" y1="787" x2="735.1" y2="791.5"/>
<line x1="762.0" y1="787" x2="762.0" y2="791.5"/>
<line x1="783.2" y1="787" x2="783.2" y2="791.5"/>
<line x1="803.2" y1="787" x2="803.2" y2="791.5"/>
<line x1="829.7" y1="787" x2="829.7" y2="791.5"/>
<line x1="850.3" y1="787" x2="850.3" y2="791.5"/>
<line x1="871.5" y1="787" x2="871.5" y2="791.5"/>
<line x1="897.6" y1="787" x2="897.6" y2="791.5"/>
<line x1="918.8" y1="787" x2="918.8" y2="791.5"/>
<line x1="939.3" y1="787" x2="939.3" y2="791.5"/>
<line x1="965.4" y1="787" x2="965.4" y2="791.5"/>
<line x1="986.7" y1="787" x2="986.7" y2="791.5"/>
<line x1="1007.9" y1="787" x2="1007.9" y2="791.5"/>
<line x1="1034.2" y1="787" x2="1034.2" y2="791.5"/>
<line x1="1055.4" y1="787" x2="1055.4" y2="791.5"/>
<line x1="1081.6" y1="787" x2="1081.6" y2="791.5"/>
<line x1="1102.0" y1="787" x2="1102.0" y2="791.5"/>
<line x1="1123.0" y1="787" x2="1123.0" y2="791.5"/>
<line x1="1144.4" y1="787" x2="1144.4" y2="791.5"/>
<line x1="1170.5" y1="787" x2="1170.5" y2="791.5"/>
<line x1="1191.7" y1="787" x2="1191.7" y2="791.5"/>
<line x1="1211.8" y1="787" x2="1211.8" y2="791.5"/>
<line x1="1238.0" y1="787" x2="1238.0" y2="791.5"/>
<line x1="1259.6" y1="787" x2="1259.6" y2="791.5"/>
<line x1="1285.6" y1="787" x2="1285.6" y2="791.5"/>
<line x1="1306.8" y1="787" x2="1306.8" y2="791.5"/>
<line x1="1328.0" y1="787" x2="1328.0" y2="791.5"/>
<line x1="1354.2" y1="787" x2="1354.2" y2="791.5"/>
</g>
<text x="40.6" y="804.8" font-size="17" fill="#f2f2f2" text-anchor="middle" textLength="25.5" lengthAdjust="spacingAndGlyphs">Mar</text>
<text x="108.9" y="804.8" font-size="17" fill="#f2f2f2" text-anchor="middle" textLength="26.0" lengthAdjust="spacingAndGlyphs">Jun</text>
<text x="179.4" y="804.8" font-size="17" fill="#f2f2f2" text-anchor="middle" textLength="26.5" lengthAdjust="spacingAndGlyphs">Sep</text>
<text x="247.5" y="804.8" font-size="17" fill="#f2f2f2" text-anchor="middle" textLength="27.0" lengthAdjust="spacingAndGlyphs">Dec</text>
<text x="313.2" y="804.8" font-size="17" fill="#f2f2f2" text-anchor="middle" textLength="25.5" lengthAdjust="spacingAndGlyphs">Mar</text>
<text x="383.9" y="804.8" font-size="17" fill="#f2f2f2" text-anchor="middle" textLength="26.0" lengthAdjust="spacingAndGlyphs">Jun</text>
<text x="452.2" y="804.8" font-size="17" fill="#f2f2f2" text-anchor="middle" textLength="26.5" lengthAdjust="spacingAndGlyphs">Sep</text>
<text x="520.3" y="804.8" font-size="17" fill="#f2f2f2" text-anchor="middle" textLength="27.0" lengthAdjust="spacingAndGlyphs">Dec</text>
<text x="588.8" y="804.8" font-size="17" fill="#f2f2f2" text-anchor="middle" textLength="25.5" lengthAdjust="spacingAndGlyphs">Mar</text>
<text x="656.6" y="804.8" font-size="17" fill="#f2f2f2" text-anchor="middle" textLength="26.0" lengthAdjust="spacingAndGlyphs">Jun</text>
<text x="724.5" y="804.8" font-size="17" fill="#f2f2f2" text-anchor="middle" textLength="26.5" lengthAdjust="spacingAndGlyphs">Sep</text>
<text x="793.2" y="804.8" font-size="17" fill="#f2f2f2" text-anchor="middle" textLength="27.0" lengthAdjust="spacingAndGlyphs">Dec</text>
<text x="860.9" y="804.8" font-size="17" fill="#f2f2f2" text-anchor="middle" textLength="25.5" lengthAdjust="spacingAndGlyphs">Mar</text>
<text x="929.0" y="804.8" font-size="17" fill="#f2f2f2" text-anchor="middle" textLength="26.0" lengthAdjust="spacingAndGlyphs">Jun</text>
<text x="997.3" y="804.8" font-size="17" fill="#f2f2f2" text-anchor="middle" textLength="26.5" lengthAdjust="spacingAndGlyphs">Sep</text>
<text x="1068.5" y="804.8" font-size="17" fill="#f2f2f2" text-anchor="middle" textLength="27.0" lengthAdjust="spacingAndGlyphs">Dec</text>
<text x="1133.7" y="804.8" font-size="17" fill="#f2f2f2" text-anchor="middle" textLength="25.5" lengthAdjust="spacingAndGlyphs">Mar</text>
<text x="1201.8" y="804.8" font-size="17" fill="#f2f2f2" text-anchor="middle" textLength="26.0" lengthAdjust="spacingAndGlyphs">Jun</text>
<text x="1272.6" y="804.8" font-size="17" fill="#f2f2f2" text-anchor="middle" textLength="26.5" lengthAdjust="spacingAndGlyphs">Sep</text>
<text x="1341.1" y="804.8" font-size="17" fill="#f2f2f2" text-anchor="middle" textLength="27.0" lengthAdjust="spacingAndGlyphs">Dec</text>
<text x="129.8" y="824.4" font-size="17" fill="#f2f2f2" text-anchor="middle" textLength="34.5" lengthAdjust="spacingAndGlyphs">2021</text>
<text x="393.6" y="824.4" font-size="17" fill="#f2f2f2" text-anchor="middle" textLength="34.5" lengthAdjust="spacingAndGlyphs">2022</text>
<text x="666.0" y="824.4" font-size="17" fill="#f2f2f2" text-anchor="middle" textLength="34.5" lengthAdjust="spacingAndGlyphs">2023</text>
<text x="942.5" y="824.4" font-size="17" fill="#f2f2f2" text-anchor="middle" textLength="34.5" lengthAdjust="spacingAndGlyphs">2024</text>
<text x="1217.8" y="824.4" font-size="17" fill="#f2f2f2" text-anchor="middle" textLength="34.5" lengthAdjust="spacingAndGlyphs">2025</text>
<g stroke="#9a9ea0" stroke-width="1.2">
<line x1="257.5" y1="807" x2="257.5" y2="828"/>
<line x1="530.3" y1="807" x2="530.3" y2="828"/>
<line x1="803.2" y1="807" x2="803.2" y2="828"/>
<line x1="1081.6" y1="807" x2="1081.6" y2="828"/>
<line x1="1354.2" y1="807" x2="1354.2" y2="828"/>
</g>
<rect x="0.6" y="1.4" width="340.7" height="38.6" rx="4" ry="4" fill="#19232a" fill-opacity="0.82" stroke="#070a0c" stroke-width="1.4"/>
<rect x="10.7" y="13.2" width="15.4" height="14.9" fill="#fff"/>
<text x="31.3" y="28.0" font-size="17.2" fill="#f4f4f4" textLength="71.7" lengthAdjust="spacingAndGlyphs">TFC1DLFN</text>
<text x="110.3" y="28.0" font-size="17.2" fill="#f4f4f4" textLength="40.0" lengthAdjust="spacingAndGlyphs">Index</text>
<rect x="158.2" y="22.0" width="6.6" height="1.7" fill="#f4f4f4"/>
<text x="172.5" y="28.0" font-size="17.2" fill="#f4f4f4" textLength="31.9" lengthAdjust="spacingAndGlyphs">Last</text>
<text x="212.0" y="28.0" font-size="17.2" fill="#f4f4f4" textLength="37.6" lengthAdjust="spacingAndGlyphs">Price</text>
<rect x="258.1" y="22.0" width="6.9" height="1.7" fill="#f4f4f4"/>
<text x="266.6" y="28.0" font-size="17.2" fill="#f4f4f4" textLength="65.7" lengthAdjust="spacingAndGlyphs">103.741k</text>
<rect x="4.2" y="399" width="307.5" height="38.6" rx="4" ry="4" fill="#1a242b" fill-opacity="0.82" stroke="#070a0c" stroke-width="1.4"/>
<rect x="14.3" y="411" width="15.4" height="14.7" fill="#fff"/>
<text x="35.2" y="425.7" font-size="17.2" fill="#f4f4f4" textLength="68.4" lengthAdjust="spacingAndGlyphs">TFC1DAIN</text>
<text x="111.3" y="425.7" font-size="17.2" fill="#f4f4f4" textLength="40.2" lengthAdjust="spacingAndGlyphs">Index</text>
<rect x="159.4" y="419.7" width="6.4" height="1.7" fill="#f4f4f4"/>
<text x="173.5" y="425.7" font-size="17.2" fill="#f4f4f4" textLength="31.7" lengthAdjust="spacingAndGlyphs">Last</text>
<text x="213.1" y="425.7" font-size="17.2" fill="#f4f4f4" textLength="37.7" lengthAdjust="spacingAndGlyphs">Price</text>
<text x="258.3" y="425.7" font-size="17.2" fill="#f4f4f4" textLength="43.7" lengthAdjust="spacingAndGlyphs">30177</text>
<text x="320.7" y="313.0" font-size="13.0" fill="#f2f2f2" textLength="105.0" lengthAdjust="spacingAndGlyphs">Leveraged Funds</text>
<text x="326.0" y="456.7" font-size="13.0" fill="#f2f2f2" textLength="100.8" lengthAdjust="spacingAndGlyphs">Asset managers</text>
<rect x="549.4" y="-3" width="340" height="26.6" fill="#27323a" fill-opacity="0.86" stroke="#0b0f12" stroke-width="1.6"/>
<g stroke="#0e1316" stroke-width="1.4"><line x1="629.8" y1="0" x2="629.8" y2="23"/><line x1="732.6" y1="0" x2="732.6" y2="23"/><line x1="810.6" y1="0" x2="810.6" y2="23"/></g>
<text x="583.5" y="15.5" font-size="15.4" fill="#c6cacd" textLength="39.7" lengthAdjust="spacingAndGlyphs">Track</text>
<text x="664.8" y="15.5" font-size="15.4" fill="#c6cacd" textLength="61.1" lengthAdjust="spacingAndGlyphs">Annotate</text>
<text x="766.5" y="15.5" font-size="15.4" fill="#c6cacd" textLength="37.0" lengthAdjust="spacingAndGlyphs">News</text>
<text x="843.5" y="15.5" font-size="15.4" fill="#c6cacd" textLength="40.0" lengthAdjust="spacingAndGlyphs">Zoom</text>
<g stroke="#8a8f93" stroke-width="1.1" fill="none">
<circle cx="565" cy="9.9" r="3.5"/><line x1="558.3" y1="9.9" x2="571.7" y2="9.9"/><line x1="565" y1="3.2" x2="565" y2="16.6"/>
<line x1="641.8" y1="14.8" x2="650.6" y2="6.3" stroke-width="2.2"/><line x1="646.2" y1="15.6" x2="651.8" y2="15.6" stroke-width="1.2"/>
<line x1="749.5" y1="5.2" x2="755" y2="5.2"/><line x1="743.5" y1="8.8" x2="755" y2="8.8"/><line x1="743.5" y1="12.2" x2="755" y2="12.2"/><line x1="743.5" y1="15.6" x2="755" y2="15.6"/><rect x="743.5" y="4.5" width="4.8" height="3.4" fill="#8a8f93" stroke="none"/>
<circle cx="824.7" cy="8.2" r="4.1" stroke-width="1.2"/><line x1="827.8" y1="11.3" x2="833" y2="16.3" stroke-width="2"/>
</g>
</svg></body></html>
